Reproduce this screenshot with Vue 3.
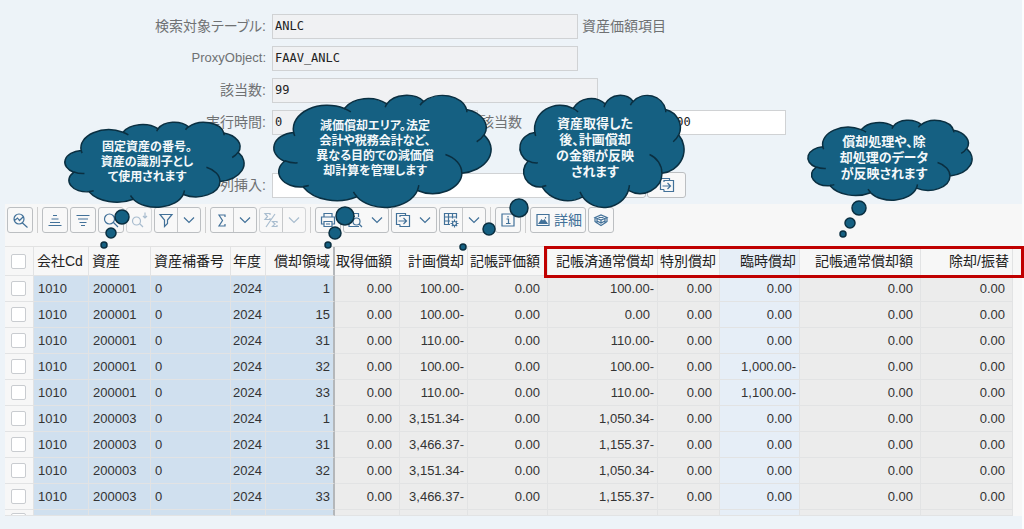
<script setup>
const columns = [
  { label: '会社Cd', w: 55, kind: 'key' },
  { label: '資産', w: 62, kind: 'key' },
  { label: '資産補番号', w: 80, kind: 'key' },
  { label: '年度', w: 35, kind: 'key tight' },
  { label: '償却領域', w: 69, kind: 'key num last-key' },
  { label: '取得価額', w: 65, kind: 'num' },
  { label: '計画償却', w: 68, kind: 'num' },
  { label: '記帳評価額', w: 80, kind: 'num' },
  { label: '記帳済通常償却', w: 110, kind: 'num' },
  { label: '特別償却', w: 62, kind: 'num' },
  { label: '臨時償却', w: 80, kind: 'num picked' },
  { label: '記帳通常償却額', w: 121, kind: 'num' },
  { label: '除却/振替', w: 92, kind: 'num' },
]

const records = [
  ['200001', '1', '100.00-', '100.00-', '0.00'],
  ['200001', '15', '100.00-', '0.00', '0.00'],
  ['200001', '31', '110.00-', '110.00-', '0.00'],
  ['200001', '32', '100.00-', '100.00-', '1,000.00-'],
  ['200001', '33', '110.00-', '110.00-', '1,100.00-'],
  ['200003', '1', '3,151.34-', '1,050.34-', '0.00'],
  ['200003', '31', '3,466.37-', '1,155.37-', '0.00'],
  ['200003', '32', '3,151.34-', '1,050.34-', '0.00'],
  ['200003', '33', '3,466.37-', '1,155.37-', '0.00'],
]
const rows = records.map(([asset, area, plan, posted, extra]) => [
  '1010', asset, '0', '2024', area, '0.00', plan, '0.00', posted, '0.00', extra, '0.00', '0.00',
])

const wide = (text) => text.endsWith('.00') || text.endsWith('額')

// Toolbar: kind is "one" (icon), "menu" (icon + arrow) or "split" (icon | arrow)
const tools = [
  { name: '詳細検索', icon: 'inspect', kind: 'one' },
  { kind: 'sep' },
  { name: '昇順', icon: 'asc', kind: 'one' },
  { name: '降順', icon: 'desc', kind: 'one' },
  { name: '検索', icon: 'search', kind: 'one' },
  { name: '次を検索', icon: 'searchNext', kind: 'one', off: true },
  { name: 'フィルタ', icon: 'filter', kind: 'split' },
  { kind: 'sep' },
  { name: '合計', icon: 'sum', kind: 'split' },
  { name: '小計', icon: 'subtotal', kind: 'split', off: true },
  { kind: 'sep' },
  { name: '印刷', icon: 'print', kind: 'one' },
  { name: 'ビュー', icon: 'view', kind: 'menu' },
  { name: 'エクスポート', icon: 'export', kind: 'menu' },
  { name: 'レイアウト', icon: 'layout', kind: 'split' },
  { kind: 'sep' },
  { name: '情報', icon: 'info', kind: 'one' },
  { kind: 'sep' },
  { name: '詳細', icon: 'image', kind: 'text' },
  { name: '学習', icon: 'cap', kind: 'one' },
]

const icons = {
  inspect: 'M11.500 12L16.500 16.500M8 3a5 5 0 1 0 0 10a5 5 0 0 0 0-10M3.500 9.500L6.500 7L8.500 9.500L12 6',
  asc: 'M7 4.500H11M5.500 8H12.500M4 11.500H14M2.500 14.500H15.500',
  desc: 'M2.500 4.500H15.500M4 8H14M5.500 11.500H12.500M7 14.500H11',
  search: 'M11.500 11.500L16 16M7.500 3a5 5 0 1 0 0 10a5 5 0 0 0 0-10',
  searchNext: 'M9.500 12.500L13 16M6.500 6a4 4 0 1 0 0 8a4 4 0 0 0 0-8M15 1.500V7M13 5L15 7L17 5',
  filter: 'M3 3.500H15L10.500 9V12.500L7.500 15.500V9Z',
  sum: 'M12 6V4H6L9.500 9.500L6 15H12V13',
  subtotal: 'M8 4V2.500H3L5.500 5.500L3 8.500H8V7M4 16L13 3M15 12V10.500H10.500L13 13L10.500 15.500H15V14',
  print: 'M5 6V2.500H13V6M5 13H2.500V6H15.500V13H13M5 10.500H13V15.500H5ZM7 13H11',
  view: 'M6 15.500H3V2.500H12.500V6M5.500 5.500H9M5.500 8.500H7M10.500 7a3.500 3.500 0 1 0 0 7a3.500 3.500 0 0 0 0-7M13 13L16 16M6 15.500H13',
  export: 'M6 13.500H2.500V2.500H11.500V4M6 6V4.500H15.500V15.500H6V13.500M4.500 10H12M9.500 7L12.500 10L9.500 13',
  layout: 'M8 13.500H2.500V2.500H14.500V7.500M2.500 6H14.500M2.500 10H8M6.500 2.500V13.500M10.500 2.500V7.500M12.500 10.500a2 2 0 1 0 0 4a2 2 0 0 0 0-4M12.500 8.500V10.500M12.500 14.500V16.500M8.500 12.500H10.500M14.500 12.500H16.500M9.800 9.800L11 11M14 14L15.200 15.200M15.200 9.800L14 11M11 14L9.800 15.200',
  info: 'M3 3H15V15H3ZM9 5V6.500M7.500 8H9.500V12.500M7 12.500H11.500',
  image: 'M3 3.500H15V14.500H3ZM11.500 6V7.500',
  cap: 'M3 6.500L9 4L15 6.500L9 9ZM5 8V12L9 14.500L13 12V8M6.500 6.500H11.500M3 7V10.500L5 12M15 7V10.500L13 12M9 9V12.500M5 10L9 12L13 10',
}
const solid = {
  image: 'M5 12.500L7.500 9L9 10.500L10.500 9L13 12.500Z',
}

// Cloud drawn on a 43200 unit square; arcs are [rx, ry, start, sweep] in 1/60000 degree
const UNIT = 43200
function trace(x, y, arcs) {
  let d = `M${x} ${y}`
  for (const [rx, ry, start, sweep] of arcs) {
    const angle = (a) => {
      const r = (a / 60000) * Math.PI / 180
      return Math.atan2(rx * Math.sin(r), ry * Math.cos(r))
    }
    const from = angle(start)
    const to = angle(start + sweep)
    x += rx * (Math.cos(to) - Math.cos(from))
    y += ry * (Math.sin(to) - Math.sin(from))
    d += `A${rx} ${ry} 0 ${sweep > 10800000 ? 1 : 0} 1 ${x.toFixed(0)} ${y.toFixed(0)}`
  }
  return d
}
const outline = trace(3900, 14370, [
  [6753, 9190, -11429249, 7426832],
  [5333, 7267, -8646143, 5396714],
  [4365, 5945, -8748475, 5983381],
  [4857, 6595, -7859164, 7034504],
  [5333, 7273, -4722533, 6541615],
  [6775, 9220, -2776035, 7816140],
  [5785, 7867, 37501, 6842000],
  [6752, 9215, 1347096, 6910353],
  [7720, 10543, 3974558, 4542661],
  [4360, 5918, -16496525, 8804134],
  [4345, 5945, -14809710, 9151131],
]) + 'Z'
const folds = [
  [4693, 26177, 4345, 5945, 5204520, 1585770],
  [6928, 34899, 4360, 5918, 4416628, 686848],
  [16478, 39090, 6752, 9215, 8257449, 844866],
  [28827, 34751, 6752, 9215, 387196, 959901],
  [34129, 22954, 5785, 7867, -4217541, 4255042],
  [41798, 15354, 5333, 7273, 1819082, 1665090],
  [38324, 5426, 4857, 6595, -824660, 891534],
  [29078, 3952, 4857, 6595, -8950887, 1091722],
  [22141, 4720, 4365, 5945, -9809656, 1061181],
  [14000, 5192, 6753, 9190, -4002417, 739161],
  [4127, 15789, 6753, 9190, 9459261, 711490],
].map(([x, y, ...arc]) => trace(x, y, [arc])).join('')

const callouts = [
  { id: 'asset', x: 65, y: 122, w: 179, h: 85, dots: [[122, 217, 7], [111, 233, 5], [104, 245, 3]],
    lines: ['固定資産の番号。', '資産の識別子とし', 'て使用されます'] },
  { id: 'area', x: 274, y: 95, w: 217, h: 112, dots: [[345, 216, 9], [335, 233, 6], [328, 245, 3]],
    lines: ['減価償却エリア。法定', '会計や税務会計など、', '異なる目的での減価償', '却計算を管理します'] },
  { id: 'plan', x: 520, y: 95, w: 164, h: 112, dots: [[519, 208, 9], [489, 229, 6], [463, 247, 3]],
    lines: ['資産取得した', '後、計画償却', 'の金額が反映', 'されます'] },
  { id: 'posted', x: 808, y: 120, w: 164, h: 80, dots: [[859, 208, 7], [850, 223, 5], [843, 234, 3]],
    lines: ['償却処理や、除', '却処理のデータ', 'が反映されます'] },
]
</script>

<template>
  <main class="page">
    <form class="criteria" @submit.prevent>
      <div class="field">
        <label for="table">検索対象テーブル:</label>
        <input id="table" class="mid" value="ANLC" readonly />
        <span class="note">資産価額項目</span>
      </div>
      <div class="field">
        <label for="proxy" class="latin">ProxyObject:</label>
        <input id="proxy" class="mid" value="FAAV_ANLC" readonly />
      </div>
      <div class="field">
        <label for="hits">該当数:</label>
        <input id="hits" class="long" value="99" readonly />
      </div>
      <div class="field">
        <label for="time">実行時間:</label>
        <input id="time" class="short" value="0" readonly />
        <label for="max" class="second">該当数</label>
        <input id="max" class="limit" value="500" />
      </div>
      <div class="field insert">
        <label for="column">列挿入:</label>
        <input id="column" class="entry" value="" />
        <button type="button" class="tool big" aria-label="検索"><svg class="icon" viewBox="0 0 18 18"><path :d="icons.search" /></svg></button>
        <button type="button" class="tool big" aria-label="挿入"><svg class="icon" viewBox="0 0 18 18"><path :d="icons.export" /></svg></button>
      </div>
    </form>

    <section class="panel">
      <div class="toolbar">
        <template v-for="(t, i) in tools" :key="i">
          <span v-if="t.kind === 'sep'" class="sep"></span>
          <button v-else type="button" class="tool" :class="t.kind" :disabled="t.off" :aria-label="t.name">
            <span class="face">
              <svg class="icon" viewBox="0 0 18 18">
                <path :d="icons[t.icon]" />
                <path v-if="solid[t.icon]" class="solid" :d="solid[t.icon]" />
              </svg>
              <span v-if="t.kind === 'text'">詳細</span>
            </span>
            <span v-if="t.kind === 'split' || t.kind === 'menu'" class="arrow">
              <svg class="chevron" viewBox="0 0 12 8"><path d="M1 1.500L6 6.500L11 1.500" /></svg>
            </span>
          </button>
        </template>
      </div>

      <table class="grid">
        <colgroup>
          <col class="col-check" />
          <col v-for="c in columns" :key="c.label" :style="{ width: c.w + 'px' }" />
          <col />
        </colgroup>
        <thead>
          <tr>
            <th class="check"><input type="checkbox" aria-label="すべて選択" /></th>
            <th v-for="c in columns" :key="c.label" :class="[c.kind, { wide: wide(c.label) }]">{{ c.label }}</th>
            <th class="rest"></th>
          </tr>
        </thead>
        <tbody>
          <tr v-for="(row, r) in rows" :key="r">
            <td class="check"><input type="checkbox" :aria-label="`行 ${r + 1}`" /></td>
            <td v-for="(value, c) in row" :key="c" :class="[columns[c].kind, { wide: wide(value) }]">{{ value }}</td>
            <td class="rest"></td>
          </tr>
          <tr class="cut">
            <td class="check"><div class="clip"><input type="checkbox" aria-label="行 10" /></div></td>
            <td v-for="c in columns" :key="c.label" :class="c.kind"></td>
            <td class="rest"></td>
          </tr>
        </tbody>
      </table>
    </section>

    <div class="highlight"></div>
    <svg class="clouds" width="1024" height="529" viewBox="0 0 1024 529" aria-hidden="true">
      <g v-for="c in callouts" :key="c.id">
        <g :transform="`translate(${c.x} ${c.y}) scale(${c.w / UNIT} ${c.h / UNIT})`">
          <path class="cloud" :d="outline" />
          <path class="fold" :d="folds" />
        </g>
        <circle v-for="(d, i) in c.dots" :key="i" class="cloud" :cx="d[0]" :cy="d[1]" :r="d[2]" />
      </g>
    </svg>
    <p v-for="c in callouts" :key="c.id" class="callout" :class="c.id">
      <span v-for="line in c.lines" :key="line">{{ line }}</span>
    </p>
  </main>
</template>

<style>
body {
  background: #edf3f8;
}
</style>

<style scoped>
.page {
  position: relative;
  box-sizing: border-box;
  min-height: 100vh;
  padding-top: 14px;
  overflow: hidden;
  background: linear-gradient(to left, #fbfcfd 2px, #edf3f8 2px);
  font-family: "Liberation Sans", "Noto Sans CJK JP", sans-serif;
  color: #333;
}
.criteria {
  display: flex;
  flex-direction: column;
  gap: 8px;
  margin-bottom: 7px;
}
.field {
  display: flex;
  align-items: center;
  height: 24px;
  font-size: 14px;
  line-height: 20px;
  color: #6f7173;
  white-space: nowrap;
}
.field.insert {
  margin-top: 31px;
}
.field label {
  width: 266px;
  margin-right: 6px;
  text-align: right;
  font-feature-settings: "palt";
}
.field label.latin {
  font-size: 13px;
}
.field label.second {
  width: auto;
  margin: 0 144px 0 2px;
}
.field input {
  box-sizing: border-box;
  height: 25px;
  padding: 0 2px;
  border: 1px solid #d0d2d4;
  border-radius: 0;
  background: #fff;
  font: 12px "DejaVu Sans Mono", "Noto Sans CJK JP", monospace;
  color: #222;
  outline: none;
}
.field input[readonly] {
  background: #f0f1f3;
}
.field .mid {
  width: 306px;
}
.field .long {
  width: 326px;
}
.field .short {
  width: 206px;
}
.field .limit {
  width: 120px;
}
.field .entry {
  width: 334px;
}
.note {
  margin-left: 4px;
}
.panel {
  margin: 0 2px 0 5px;
  background: #f7f7f7;
}
.toolbar {
  display: flex;
  gap: 2px;
  padding: 3px 2px 13px;
}
.sep {
  width: 1px;
  margin: 0 2px;
  background: #cfcfcf;
}
.tool {
  display: flex;
  box-sizing: border-box;
  width: 26px;
  height: 26px;
  padding: 0;
  border: 1px solid #bcbfc2;
  border-radius: 3px;
  background: #f8f8f8;
  color: #427199;
  font: 14px/24px "Liberation Sans", "Noto Sans CJK JP", sans-serif;
}
.tool.big {
  width: 39px;
  margin-left: 1px;
  align-items: center;
  justify-content: center;
}
.tool.split {
  width: 47px;
}
.tool.menu {
  width: 46px;
}
.tool.text {
  width: 56px;
}
.tool:disabled {
  border-color: #d3d5d7;
  color: #a9bdcf;
}
.face,
.arrow {
  display: flex;
  flex: 1;
  align-items: center;
  justify-content: center;
  height: 100%;
}
.text .face {
  gap: 2px;
}
.split .arrow {
  border-left: 1px solid #c6c8ca;
}
.icon {
  width: 18px;
  height: 18px;
  flex: none;
}
.chevron {
  width: 12px;
  height: 8px;
}
.icon path,
.chevron path {
  fill: none;
  stroke: currentColor;
  stroke-width: 1.2;
}
.icon .solid {
  fill: currentColor;
}
.grid {
  width: 100%;
  table-layout: fixed;
  border-collapse: separate;
  border-spacing: 0;
  border-top: 1px solid #e2e2e2;
}
.col-check {
  width: 29px;
}
.grid th,
.grid td {
  box-sizing: border-box;
  height: 26px;
  padding: 0 0 0 4px;
  border-right: 1px solid #e2e3e4;
  border-bottom: 1px solid #e2e3e4;
  background: #ececec;
  font-size: 13px;
  font-weight: 400;
  line-height: 20px;
  text-align: left;
  white-space: nowrap;
  color: #333;
}
.grid th {
  height: 29px;
  padding-left: 3px;
  background: #f7f7f7;
  font-size: 14px;
  color: #222;
}
.grid td.key {
  background: #d0e0ef;
}
.grid .tight {
  padding-left: 2px;
}
.grid .num {
  padding: 0 3px 0 0;
  text-align: right;
}
.grid .num.wide {
  padding-right: 7px;
}
.grid .last-key {
  border-right: 2px solid #b4b7ba;
}
.grid .picked {
  background: #e6eef7;
}
.grid td.check,
.grid td.rest {
  background: #f7f7f7;
}
.grid .rest {
  border-right: 0;
  border-bottom-color: #f7f7f7;
}
.grid .check {
  padding: 0 0 0 6px;
}
.grid input {
  display: block;
  appearance: none;
  width: 15px;
  height: 15px;
  margin: 0;
  border: 1px solid #c9ccd0;
  border-radius: 2px;
  background: #fff;
}
.grid .cut td {
  height: 6px;
}
.clip {
  height: 2px;
  padding-top: 3px;
  overflow: hidden;
}
.highlight {
  position: absolute;
  top: 246px;
  right: 0;
  left: 544px;
  box-sizing: border-box;
  height: 32px;
  border: 3px solid #c00000;
}
.clouds {
  position: absolute;
  top: 0;
  left: 0;
}
.cloud,
.fold {
  fill: #156082;
  stroke: #0a2f41;
  stroke-width: 1.5;
  vector-effect: non-scaling-stroke;
}
.fold {
  fill: none;
}
.callout {
  position: absolute;
  display: flex;
  flex-direction: column;
  align-items: center;
  margin: 0;
  font-family: "Liberation Sans", "Noto Sans CJK JP", sans-serif;
  font-size: 12px;
  font-weight: 700;
  line-height: 15px;
  font-feature-settings: "palt";
  white-space: nowrap;
  color: #f4f8fa;
}
.asset {
  top: 140px;
  left: 97px;
  width: 100px;
}
.area {
  top: 119px;
  left: 315px;
  width: 120px;
}
.plan {
  top: 116px;
  left: 545px;
  width: 100px;
  font-size: 13px;
  line-height: 16px;
}
.posted {
  top: 134px;
  left: 834px;
  width: 100px;
  font-size: 13px;
  line-height: 16px;
}
</style>
